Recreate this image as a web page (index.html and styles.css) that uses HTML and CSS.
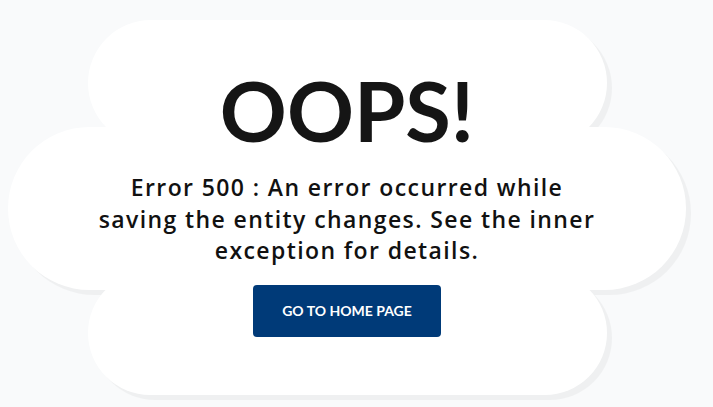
FILE: index.html
```html
<!DOCTYPE html>
<html lang="en">
<head>
<meta charset="utf-8">
<title>Oops!</title>
<link rel="stylesheet" href="styles.css">
</head>
<body>
<main class="page">
  <div class="cloud">
    <div class="shape">
      <div class="piece piece-top"></div>
      <div class="piece piece-mid"></div>
      <div class="piece piece-bot"></div>
    </div>
    <div class="content">
      <h1 class="title">OOPS!</h1>
      <p class="message">Error 500 : An error occurred while<br>saving the entity changes. See the inner<br>exception for details.</p>
      <a class="home-btn" href="#">GO TO HOME PAGE</a>
    </div>
  </div>
</main>
</body>
</html>
```
FILE: styles.css
```css
html, body {
  margin: 0;
  padding: 0;
}
body {
  background: #f9fafb;
  font-family: Lato, "Noto Sans", sans-serif;
  width: 713px;
  height: 407px;
  overflow: hidden;
}
.page {
  padding: 20px 0 0 8px;
}
.cloud {
  display: grid;
  width: 678px;
  height: 377px;
}
.shape,
.content {
  grid-area: 1 / 1;
}
.shape {
  display: grid;
  filter: drop-shadow(5px 5px 0 #eff0f1);
}
.piece {
  grid-area: 1 / 1;
  background: #fff;
  justify-self: start;
  align-self: start;
}
.piece-top {
  margin-left: 80px;
  width: 519px;
  height: 126px;
  border-radius: 63px;
}
.piece-mid {
  margin-top: 107px;
  width: 678px;
  height: 163px;
  border-radius: 82px;
}
.piece-bot {
  margin-top: 251px;
  margin-left: 80px;
  width: 519px;
  height: 124px;
  border-radius: 62px;
}
.content {
  position: relative;
  z-index: 1;
  display: flex;
  flex-direction: column;
  align-items: center;
  padding-top: 49px;
}
.title {
  margin: 0;
  font-size: 83px;
  line-height: 1;
  font-weight: 700;
  color: #151515;
}
.message {
  margin: 20px 0 0;
  font-family: "Open Sans", Lato, sans-serif;
  font-size: 23px;
  line-height: 31.5px;
  font-weight: 600;
  letter-spacing: 1.4px;
  color: #111;
  text-align: center;
}
.home-btn {
  margin-top: 18px;
  width: 188px;
  height: 52px;
  line-height: 52px;
  text-align: center;
  background: #003a78;
  color: #fff;
  border-radius: 4px;
  font-size: 14px;
  font-weight: 700;
  text-decoration: none;
}
```
